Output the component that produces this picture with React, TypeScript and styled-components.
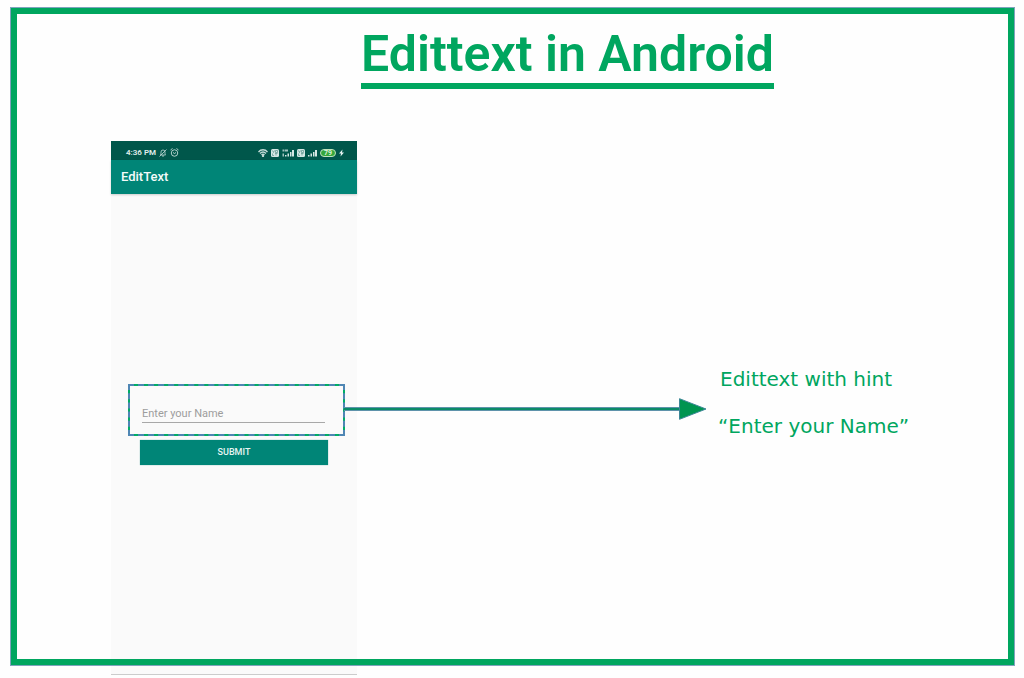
import React from "react";
import styled, { createGlobalStyle } from "styled-components";

const GlobalStyle = createGlobalStyle`
  *, *::before, *::after { box-sizing: border-box; }
  body { margin: 0; background: #fefefe; }
`;

const Page = styled.main`
  position: relative;
  min-height: 100vh;
  padding: 25px 0 3px 111px;
  &::after {
    content: "";
    position: absolute;
    inset: 8px 10px 13px 11px;
    border: 6px solid #00a65f;
    outline: 1px solid #7fa3bd;
    pointer-events: none;
  }
`;

const Header = styled.header`
  display: flex;
  justify-content: center;
  margin-bottom: 52px;
`;

const Title = styled.h1`
  margin: 0;
  border-bottom: 6px solid #00a65f;
  color: #00a65f;
  font: 600 50px/58px Roboto, "Liberation Sans", sans-serif;
`;

const Diagram = styled.section`
  display: grid;
  grid-template-columns: 246px minmax(80px, 350px) auto;
  align-items: start;
`;

const Phone = styled.div`
  display: flex;
  flex-direction: column;
  min-height: 534px;
  background: #fafafa;
  border-bottom: 1px solid #cccccc;
  font-family: Roboto, sans-serif;
`;

const StatusBar = styled.div`
  display: flex;
  align-items: center;
  justify-content: space-between;
  height: 19px;
  padding: 4px 13px 0 15px;
  background: #00574b;
  color: #e0eeec;
  font-size: 8px;
  font-weight: 600;
`;

const StatusGroup = styled.div`
  display: flex;
  align-items: center;
  gap: 3px;
  svg { display: block; }
`;

const AppBar = styled.div`
  height: 34px;
  padding-left: 10px;
  background: #008577;
  box-shadow: 0 1px 2px #00000030;
  color: #f4fbfa;
  font-size: 13px;
  font-weight: 500;
  line-height: 34px;
`;

const Form = styled.form`
  display: flex;
  flex-direction: column;
  gap: 4px;
  margin: 190px 12px 0 17px;
`;

const Highlight = styled.label`
  display: block;
  height: 52px;
  padding: 19px 18px 0 12px;
  border: 2px dashed #4f86b4;
  background: linear-gradient(#fafafa, #fafafa) padding-box, #00ad66 border-box;
`;

const NameInput = styled.input`
  display: block;
  width: 100%;
  height: 18px;
  padding: 0;
  border: 0;
  border-bottom: 1px solid #a8a8a8;
  border-radius: 0;
  outline: 0;
  background: transparent;
  color: #333333;
  font: 11px/16px Roboto, sans-serif;
  &::placeholder { color: #9d9d9d; opacity: 1; }
`;

const SubmitButton = styled.button`
  height: 25px;
  margin: 0 17px 0 12px;
  padding: 0;
  border: 0;
  background: #008577;
  box-shadow: 0 0 1px #00857799;
  color: #e8f5f3;
  font: 500 9px/25px Roboto, sans-serif;
`;

const Arrow = styled.div`
  display: flex;
  align-items: center;
  margin: 257px 0 0 -13px;
  svg { display: block; flex: none; }
`;

const ArrowLine = styled.div`
  flex: 1;
  height: 4px;
  border: solid #5f93ab;
  border-width: 1px 0;
  background: #0b8b68;
`;

const Note = styled.p`
  margin: 215px 0 0 11px;
  color: #00a65f;
  font: 20px/47px "DejaVu Sans", sans-serif;
  white-space: nowrap;
`;

const NoteLine = styled.span<{ $indent?: boolean }>`
  display: block;
  padding-left: ${(p) => (p.$indent ? 2 : 0)}px;
`;

const MutedBell = () => (
  <svg width="8" height="8" viewBox="0 0 16 16" fill="none" stroke="#c4dcd8" strokeWidth="1.6">
    <path d="M3 12h10c-1-2-1-3-1-6a4 4 0 0 0-8 0c0 3 0 4-1 6zM6 14h4M1 15L15 1" />
  </svg>
);

const Alarm = () => (
  <svg width="9" height="9" viewBox="0 0 18 18" fill="none" stroke="#c4dcd8" strokeWidth="1.8">
    <circle cx="9" cy="10" r="6.5" />
    <path d="M1 4l4-3M17 4l-4-3M6 9l3 2 3-2" />
  </svg>
);

const Wifi = () => (
  <svg width="10" height="8" viewBox="0 0 20 16" fill="none" stroke="#c4dcd8" strokeWidth="2.6">
    <path d="M1 6c5-6 13-6 18 0M4 9c4-4 8-4 12 0M7 12c2-2 4-2 6 0" />
    <circle cx="10" cy="14" r="1" fill="#c4dcd8" />
  </svg>
);

const VoLte = () => (
  <svg width="8" height="8" viewBox="0 0 16 16">
    <rect width="16" height="16" rx="3" fill="#d5e7e4" />
    <path d="M3 3l2 4 2-4M9 3h4v4H9zM3 9v4h3M8 9h5M10 9v4" fill="none" stroke="#4b887f" strokeWidth="1.2" />
  </svg>
);

const Signal = ({ data = false }: { data?: boolean }) => (
  <svg width={data ? 12 : 9} height="8" viewBox={data ? "-6 0 24 16" : "0 0 18 16"} fill="#d5e7e4">
    <path d="M0 12h3v3H0zM5 9h3v6H5zM10 6h3v9h-3zM14 2h4v13h-4z" />
    {data && <path d="M-5 1h4v4h-4zM0 1h6v4H0zM-5 9h3v6h-3z" opacity="0.75" />}
  </svg>
);

const Battery = styled.span`
  width: 16px;
  height: 8px;
  border: 1px solid #bfe3bd;
  border-radius: 4px;
  background: #35a83c;
  color: #e5f7e4;
  font-size: 7px;
  line-height: 6px;
  text-align: center;
`;

const Bolt = () => (
  <svg width="5" height="8" viewBox="0 0 10 16" fill="#e6f3f1">
    <path d="M7 1L0 9h4l-1 6 7-8H6z" />
  </svg>
);

export default function App() {
  return (
    <>
      <GlobalStyle />
      <Page>
        <Header>
          <Title>Edittext in Android</Title>
        </Header>
        <Diagram>
          <Phone>
            <StatusBar>
              <StatusGroup>
                <span>4:36 PM</span>
                <MutedBell />
                <Alarm />
              </StatusGroup>
              <StatusGroup>
                <Wifi />
                <VoLte />
                <Signal data />
                <VoLte />
                <Signal />
                <Battery>79</Battery>
                <Bolt />
              </StatusGroup>
            </StatusBar>
            <AppBar>EditText</AppBar>
            <Form onSubmit={(e) => e.preventDefault()}>
              <Highlight>
                <NameInput aria-label="Name" placeholder="Enter your Name" />
              </Highlight>
              <SubmitButton type="submit">SUBMIT</SubmitButton>
            </Form>
          </Phone>
          <Arrow>
            <ArrowLine />
            <svg width="28" height="22" viewBox="0 0 28 22">
              <path d="M0.5 0.7L27 11L0.5 21.3z" fill="#009450" stroke="#3d8797" />
            </svg>
          </Arrow>
          <Note>
            <NoteLine $indent>Edittext with hint</NoteLine>
            <NoteLine>“Enter your Name”</NoteLine>
          </Note>
        </Diagram>
      </Page>
    </>
  );
}
